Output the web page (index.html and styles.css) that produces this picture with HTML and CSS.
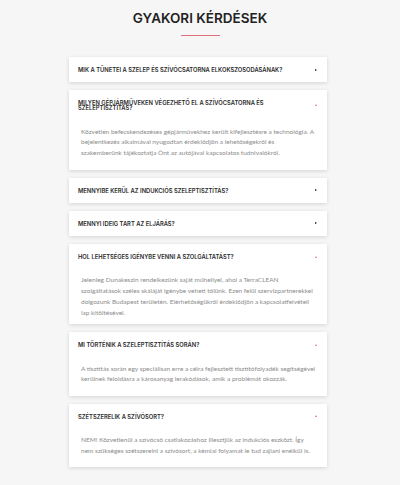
FILE: index.html
```html
<!DOCTYPE html>
<html lang="hu">
<head>
    <meta charset="UTF-8">
    <meta name="viewport" content="width=device-width, initial-scale=1.0">
    <title>Gyakori kérdések</title>
    <link rel="stylesheet" href="styles.css">
</head>
<body>

<section class="faq">
    <h1>Gyakori kérdések</h1>
    <div class="title-line"></div>

    <div class="faq-list">
        <div class="faq-item">
            <div class="faq-question">
                <span>Mik a tünetei a szelep és szívócsatorna elkokszosodásának?</span>
                <i class="arrow closed"></i>
            </div>
        </div>

        <div class="faq-item open">
            <div class="faq-question">
                <span>Milyen gépjárműveken végezhető el a szívócsatorna és szeleptisztítás?</span>
                <i class="arrow"></i>
            </div>
            <div class="faq-answer">
                Közvetlen befecskendezéses gépjárművekhez került kifejlesztésre a technológia. A bejelentkezés alkalmával nyugodtan érdeklődjön a lehetőségekről és szakemberünk tájékoztatja Önt az autójával kapcsolatos tudnivalókról.
            </div>
        </div>

        <div class="faq-item">
            <div class="faq-question">
                <span>Mennyibe kerül az indukciós szeleptisztítás?</span>
                <i class="arrow closed"></i>
            </div>
        </div>

        <div class="faq-item">
            <div class="faq-question">
                <span>Mennyi ideig tart az eljárás?</span>
                <i class="arrow closed"></i>
            </div>
        </div>

        <div class="faq-item open">
            <div class="faq-question">
                <span>Hol lehetséges igénybe venni a szolgáltatást?</span>
                <i class="arrow"></i>
            </div>
            <div class="faq-answer short">
                Jelenleg Dunakeszin rendelkezünk saját műhellyel, ahol a TerraCLEAN szolgáltatások széles skáláját igénybe veheti tőlünk. Ezen felül szervizpartnerekkel dolgozunk Budapest területén. Elérhetőségükről érdeklődjön a kapcsolatfelvételi lap kitöltésével.
            </div>
        </div>

        <div class="faq-item open">
            <div class="faq-question">
                <span>Mi történik a szeleptisztítás során?</span>
                <i class="arrow"></i>
            </div>
            <div class="faq-answer">
                A tisztítás során egy speciálisan erre a célra fejlesztett tisztítófolyadék segítségével kerülnek feloldásra a károsanyag lerakódások, amik a problémát okozzák.
            </div>
        </div>

        <div class="faq-item open">
            <div class="faq-question">
                <span>Szétszerelik a szívósort?</span>
                <i class="arrow"></i>
            </div>
            <div class="faq-answer">
                NEM! Közvetlenül a szívócső csatlakozáshoz illesztjük az indukciós eszközt. Így nem szükséges szétszerelni a szívósort, a kémiai folyamat le tud zajlani enélkül is.
            </div>
        </div>
    </div>
</section>

</body>
</html>
```

FILE: styles.css
```css
:root {
    --bg-color: #f6f6f6;
    --title-color: #222;
    --accent-color: #e0707a;
    --text-color: #8c8c8c;
}
body {
    margin: 0;
    padding: 0;
    background-color: var(--bg-color);
    font-family: 'Inter', 'Open Sans', Arial, sans-serif;
}
.faq {
    padding: 8px 0 20px;
}
h1 {
    margin: 0;
    text-align: center;
    font-size: 13.5px;
    line-height: 20px;
    font-weight: 600;
    text-transform: uppercase;
    color: var(--title-color);
}
.title-line {
    width: 39px;
    height: 1px;
    margin: 7px auto 0;
    background-color: var(--accent-color);
}
.faq-list {
    display: flex;
    flex-direction: column;
    gap: 8px;
    padding: 21px 73px 0 69px;
}
.faq-item {
    background-color: #fff;
    box-shadow: 0 1px 4px rgba(0, 0, 0, 0.14);
}
.faq-question {
    display: flex;
    align-items: center;
    justify-content: space-between;
    gap: 6px;
    padding: 10px 9px 10px 9px;
    font-size: 5.8px;
    line-height: 5.2px;
    font-weight: 600;
    text-transform: uppercase;
    color: #2a2a2a;
}
.faq-question span {
    max-width: 215px;
}
.arrow {
    flex-shrink: 0;
    width: 0;
    height: 0;
    margin-right: 1px;
    border-left: 1.5px solid transparent;
    border-right: 1.5px solid transparent;
    border-bottom: 2px solid var(--accent-color);
}
.arrow.closed {
    border-top: 1.5px solid transparent;
    border-bottom: 1.5px solid transparent;
    border-left: 2.5px solid #111;
    border-right: 0;
    margin-right: 1.5px;
}
.faq-answer {
    padding: 6px 11px 10.5px 12px;
    font-family: 'Lato', 'Open Sans', Arial, sans-serif;
    font-size: 6.5px;
    line-height: 10.8px;
    color: var(--text-color);
}
.faq-answer.short {
    padding-bottom: 6px;
}
```
